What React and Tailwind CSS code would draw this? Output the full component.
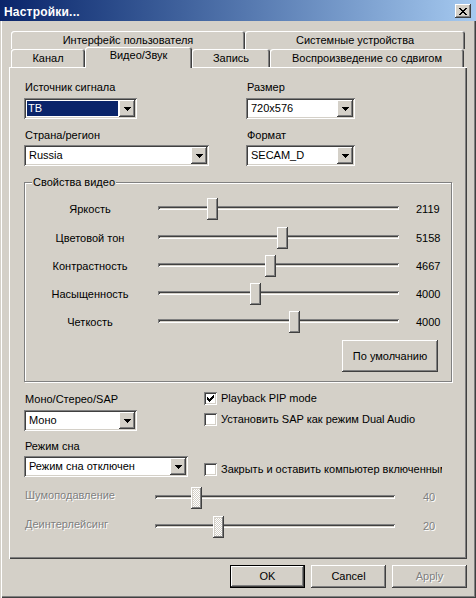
import React from "react";

const RAISED =
  "shadow-[inset_-1px_-1px_#404040,inset_1px_1px_#fff,inset_-2px_-2px_#808080,inset_2px_2px_#d4d0c8]";
const SUNKEN =
  "shadow-[inset_1px_1px_#808080,inset_-1px_-1px_#fff,inset_2px_2px_#404040,inset_-2px_-2px_#d4d0c8]";
const DIS = "text-[#808080] [text-shadow:1px_1px_0_#fff]";
const CHECKER =
  "bg-[image:repeating-conic-gradient(#fff_0_25%,#d4d0c8_0_50%)] bg-[length:2px_2px]";

function Combo({ w, value, selected }) {
  return (
    <div className={`${w} h-[21px] bg-white p-[2px] flex ${SUNKEN}`}>
      <div className="flex-1 min-w-0 p-[1px] flex">
        {selected ? (
          <div className="flex-1 bg-[#0a246a] text-white pl-[1px] flex items-center">
            {value}
          </div>
        ) : (
          <div className="flex-1 pl-[2px] flex items-center whitespace-nowrap overflow-hidden">
            {value}
          </div>
        )}
      </div>
      <div
        className={`w-[16px] h-[17px] shrink-0 bg-[#d4d0c8] flex items-center justify-center ${RAISED}`}
      >
        <svg width="7" height="4" viewBox="0 0 7 4" shapeRendering="crispEdges">
          <path
            d="M0 0h7v1h-1v1h-1v1h-1v1h-1v-1h-1v-1h-1v-1h-1z"
            fill="#000"
          />
        </svg>
      </div>
    </div>
  );
}

function Check({ checked }) {
  return (
    <div
      className={`w-[13px] h-[13px] shrink-0 bg-white flex items-center justify-center ${SUNKEN}`}
    >
      {checked && (
        <svg width="7" height="7" viewBox="0 0 7 7" shapeRendering="crispEdges">
          <path
            d="M6 0h1v3h-1v1h-1v1h-1v1h-1v1h-1v-1h-1v-1h-1v-3h1v1h1v1h1v-1h1v-1h1v-1h1z"
            fill="#000"
          />
        </svg>
      )}
    </div>
  );
}

function Slider({ w, pos, disabled }) {
  return (
    <div className={`${w} relative h-[22px] shrink-0`}>
      <div className={`absolute left-0 right-0 top-[8px] h-[4px] ${SUNKEN}`} />
      <div
        className={`absolute top-0 w-[11px] h-[22px] ${
          disabled ? CHECKER : "bg-[#d4d0c8]"
        } ${RAISED}`}
        style={{ left: pos }}
      />
    </div>
  );
}

function Tab({ w, children }) {
  return (
    <div
      className={`${w} h-[18px] shrink-0 rounded-t-[3px] text-center pt-[3px] whitespace-nowrap shadow-[inset_1px_1px_#fff,inset_-1px_0_#404040,inset_-2px_0_#808080]`}
    >
      {children}
    </div>
  );
}

const videoRows = [
  { label: "Яркость", value: "2119", pos: 49, h: "h-[30px]" },
  { label: "Цветовой тон", value: "5158", pos: 119, h: "h-[28px]" },
  { label: "Контрастность", value: "4667", pos: 107, h: "h-[28px]" },
  { label: "Насыщенность", value: "4000", pos: 92, h: "h-[28px]" },
  { label: "Четкость", value: "4000", pos: 131, h: "h-[28px]" },
];

export default function App() {
  return (
    <div className="w-[476px] h-[598px] flex flex-col bg-[#d4d0c8] font-['Liberation_Sans',Arial,sans-serif] text-[11px] leading-[13px] text-black overflow-hidden">
      {/* Title bar */}
      <div className="h-[21px] shrink-0 flex bg-linear-to-r from-[#0a246a] to-[#a6caf0]">
        <div className="pl-[4px] pt-[6px] text-white font-bold text-[12px] leading-[13px] tracking-[0.2px]">
          Настройки...
        </div>
        <div
          className={`ml-auto mt-[4px] mr-[5px] w-[16px] h-[14px] bg-[#d4d0c8] flex items-center justify-center ${RAISED}`}
        >
          <svg width="8" height="7" viewBox="0 0 8 7" shapeRendering="crispEdges">
            <path
              d="M0 0h2v1h1v1h2v-1h1v-1h2v1h-1v1h-1v1h-1v1h1v1h1v1h1v1h-2v-1h-1v-1h-2v1h-1v1h-2v-1h1v-1h1v-1h1v-1h-1v-1h-1v-1h-1z"
              fill="#000"
            />
          </svg>
        </div>
      </div>

      {/* Body */}
      <div className="flex-1 flex flex-col px-[9px] pt-[10px] shadow-[inset_1px_0_#d4d0c8,inset_2px_0_#fff,inset_-1px_-1px_#404040,inset_-2px_-2px_#808080]">
        {/* Tabs */}
        <div className="flex pl-[2px] h-[18px]">
          <Tab w="w-[234px]">Интерфейс пользователя</Tab>
          <Tab w="w-[220px]">Системные устройства</Tab>
        </div>
        <div className="flex pl-[2px] h-[18px] items-start">
          <Tab w="w-[74px]">Канал</Tab>
          <div className="relative z-10 w-[107px] h-[21px] -mt-[2px] shrink-0 rounded-t-[3px] bg-[#d4d0c8] text-center pt-[2px] shadow-[inset_1px_1px_#fff,inset_-1px_0_#404040,inset_-2px_0_#808080]">
            Видео/Звук
          </div>
          <Tab w="w-[78px]">Запись</Tab>
          <Tab w="w-[194px]">Воспроизведение со сдвигом</Tab>
        </div>

        {/* Panel */}
        <div className="h-[492px] shrink-0 flex flex-col pl-[15px] pt-[14px] shadow-[inset_1px_1px_#fff,inset_-1px_-1px_#404040,inset_-2px_-2px_#808080]">
          {/* Top section */}
          <div className="flex">
            <div className="w-[222px] flex flex-col">
              <div className="pl-[1px]">Источник сигнала</div>
              <div className="mt-[4px]">
                <Combo w="w-[113px]" value="ТВ" selected />
              </div>
              <div className="pl-[1px] mt-[10px]">Страна/регион</div>
              <div className="mt-[3px]">
                <Combo w="w-[185px]" value="Russia" />
              </div>
            </div>
            <div className="flex flex-col">
              <div className="pl-[1px]">Размер</div>
              <div className="mt-[4px]">
                <Combo w="w-[109px]" value="720x576" />
              </div>
              <div className="pl-[1px] mt-[10px]">Формат</div>
              <div className="mt-[3px]">
                <Combo w="w-[109px]" value="SECAM_D" />
              </div>
            </div>
          </div>

          {/* Group box */}
          <div className="relative mt-[16px] w-[428px] h-[200px] shrink-0 border border-[#808080] shadow-[inset_1px_1px_#fff,1px_1px_#fff] pt-[11px] flex flex-col">
            <div className="absolute -top-[7px] left-[7px] px-[1px] bg-[#d4d0c8]">
              Свойства видео
            </div>
            {videoRows.map((r) => (
              <div key={r.label} className={`flex items-center ${r.h}`}>
                <div className="w-[130px] text-center">{r.label}</div>
                <div className="ml-[3px]">
                  <Slider w="w-[241px]" pos={r.pos} />
                </div>
                <div className="ml-[17px]">{r.value}</div>
              </div>
            ))}
            <div
              className={`self-end mr-[13px] mt-[4px] w-[96px] h-[32px] flex items-center justify-center bg-[#d4d0c8] ${RAISED}`}
            >
              По умолчанию
            </div>
          </div>

          {/* Bottom section */}
          <div className="flex">
            <div className="w-[180px] flex flex-col">
              <div className="pl-[1px] mt-[11px]">Моно/Стерео/SAP</div>
              <div className="mt-[4px]">
                <Combo w="w-[113px]" value="Моно" />
              </div>
              <div className="pl-[1px] mt-[9px]">Режим сна</div>
              <div className="mt-[3px]">
                <Combo w="w-[164px]" value="Режим сна отключен" />
              </div>
            </div>
            <div className="flex flex-col">
              <div className="mt-[10px] flex items-center gap-[4px]">
                <Check checked />
                <span>Playback PIP mode</span>
              </div>
              <div className="mt-[8px] flex items-center gap-[4px]">
                <Check />
                <span>Установить SAP как режим Dual Audio</span>
              </div>
              <div className="mt-[37px] flex items-center gap-[4px]">
                <Check />
                <span className="w-[221px] overflow-hidden whitespace-nowrap">
                  Закрыть и оставить компьютер включенным
                </span>
              </div>
            </div>
          </div>

          {/* Disabled sliders */}
          <div className="mt-[10px] flex items-center h-[22px]">
            <div className={`w-[131px] pl-[1px] pb-[6px] ${DIS}`}>Шумоподавление</div>
            <Slider w="w-[240px]" pos={36} disabled />
            <div className={`ml-[28px] pb-[2px] ${DIS}`}>40</div>
          </div>
          <div className="mt-[7px] flex items-center h-[22px]">
            <div className={`w-[131px] pl-[1px] pb-[6px] ${DIS}`}>Деинтерлейсинг</div>
            <Slider w="w-[240px]" pos={58} disabled />
            <div className={`ml-[28px] pb-[2px] ${DIS}`}>20</div>
          </div>
        </div>

        {/* Buttons */}
        <div className="mt-[6px] flex justify-end gap-[6px]">
          <div className="w-[75px] h-[23px] flex items-center justify-center bg-[#d4d0c8] shadow-[inset_0_0_0_1px_#000,inset_-2px_-2px_#404040,inset_2px_2px_#fff,inset_-3px_-3px_#808080]">
            OK
          </div>
          <div
            className={`w-[75px] h-[23px] flex items-center justify-center bg-[#d4d0c8] ${RAISED}`}
          >
            Cancel
          </div>
          <div
            className={`w-[75px] h-[23px] flex items-center justify-center bg-[#d4d0c8] ${RAISED} ${DIS}`}
          >
            Apply
          </div>
        </div>
      </div>
    </div>
  );
}
